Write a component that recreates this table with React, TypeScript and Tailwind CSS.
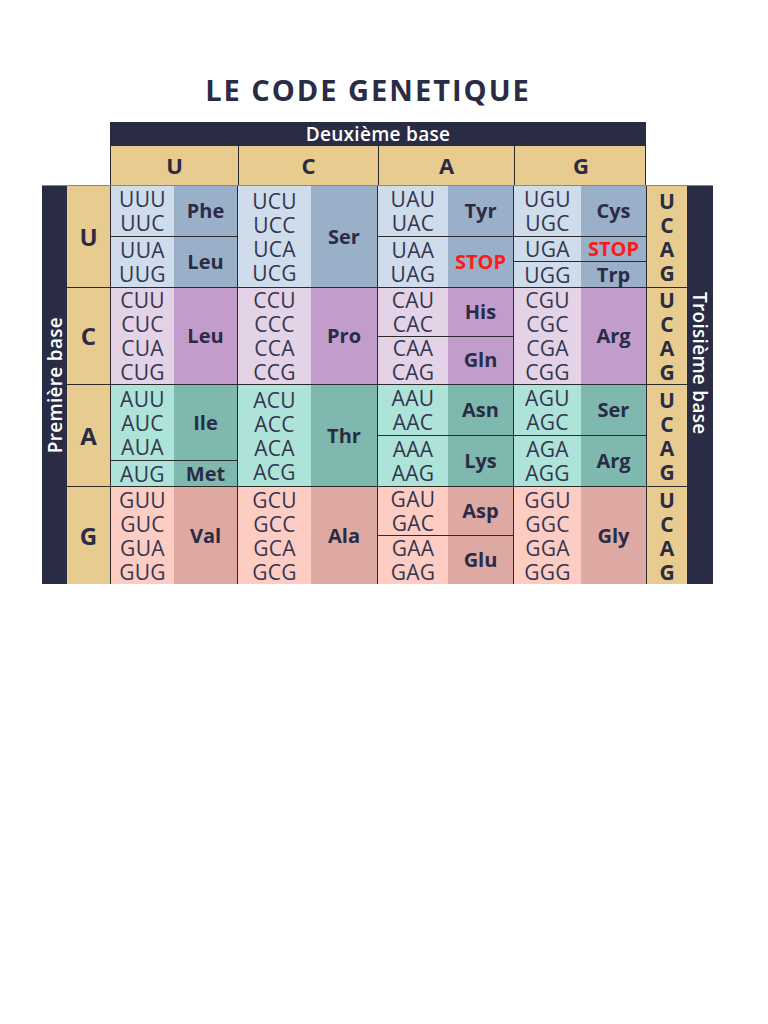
import React from "react"

type Group = { codons: string[]; aa: string; stop?: boolean }

const NAVY = "bg-[#2a2c46]"
const BEIGE = "bg-[#e8cb8e]"

const GROW: Record<number, string> = {
  1: "flex-[1]",
  2: "flex-[2]",
  3: "flex-[3]",
  4: "flex-[4]",
}

const ROWS = [
  {
    base: "U",
    codonBg: "bg-[#cedcec]",
    aaBg: "bg-[#9aafc8]",
    cells: [
      [
        { codons: ["UUU", "UUC"], aa: "Phe" },
        { codons: ["UUA", "UUG"], aa: "Leu" },
      ],
      [{ codons: ["UCU", "UCC", "UCA", "UCG"], aa: "Ser" }],
      [
        { codons: ["UAU", "UAC"], aa: "Tyr" },
        { codons: ["UAA", "UAG"], aa: "STOP", stop: true },
      ],
      [
        { codons: ["UGU", "UGC"], aa: "Cys" },
        { codons: ["UGA"], aa: "STOP", stop: true },
        { codons: ["UGG"], aa: "Trp" },
      ],
    ] as Group[][],
  },
  {
    base: "C",
    codonBg: "bg-[#e4d2e7]",
    aaBg: "bg-[#c29ccb]",
    cells: [
      [{ codons: ["CUU", "CUC", "CUA", "CUG"], aa: "Leu" }],
      [{ codons: ["CCU", "CCC", "CCA", "CCG"], aa: "Pro" }],
      [
        { codons: ["CAU", "CAC"], aa: "His" },
        { codons: ["CAA", "CAG"], aa: "Gln" },
      ],
      [{ codons: ["CGU", "CGC", "CGA", "CGG"], aa: "Arg" }],
    ] as Group[][],
  },
  {
    base: "A",
    codonBg: "bg-[#ade3d9]",
    aaBg: "bg-[#7fb8af]",
    cells: [
      [
        { codons: ["AUU", "AUC", "AUA"], aa: "Ile" },
        { codons: ["AUG"], aa: "Met" },
      ],
      [{ codons: ["ACU", "ACC", "ACA", "ACG"], aa: "Thr" }],
      [
        { codons: ["AAU", "AAC"], aa: "Asn" },
        { codons: ["AAA", "AAG"], aa: "Lys" },
      ],
      [
        { codons: ["AGU", "AGC"], aa: "Ser" },
        { codons: ["AGA", "AGG"], aa: "Arg" },
      ],
    ] as Group[][],
  },
  {
    base: "G",
    codonBg: "bg-[#fdcdc4]",
    aaBg: "bg-[#dea9a2]",
    cells: [
      [{ codons: ["GUU", "GUC", "GUA", "GUG"], aa: "Val" }],
      [{ codons: ["GCU", "GCC", "GCA", "GCG"], aa: "Ala" }],
      [
        { codons: ["GAU", "GAC"], aa: "Asp" },
        { codons: ["GAA", "GAG"], aa: "Glu" },
      ],
      [{ codons: ["GGU", "GGC", "GGA", "GGG"], aa: "Gly" }],
    ] as Group[][],
  },
]

// codon sub-column width per second base
const CODON_W = ["w-[63px]", "w-[73px]", "w-[70px]", "w-[67px]"]
const BASES = ["U", "C", "A", "G"]

function Cell({
  groups,
  codonW,
  codonBg,
  aaBg,
  top,
}: {
  groups: Group[]
  codonW: string
  codonBg: string
  aaBg: string
  top: boolean
}) {
  return (
    <div className={`flex flex-col border-l border-[#2b2b2b] ${top ? "" : "border-t"}`}>
      {groups.map((g, i) => (
        <div
          key={i}
          className={`flex min-h-0 ${GROW[g.codons.length]} ${i > 0 ? "border-t border-[#2b2b2b]" : ""}`}
        >
          <div className={`${codonW} ${codonBg} flex flex-col items-center justify-center`}>
            {g.codons.map((c) => (
              <div key={c} className="h-[24px] text-[21px] leading-[24px] tracking-[0.3px] text-[#34364f]">
                {c}
              </div>
            ))}
          </div>
          <div className={`flex-1 ${aaBg} flex items-center justify-center`}>
            <div
              className={`text-[20px] leading-[24px] font-bold ${g.stop ? "text-[#ff1a1a]" : "text-[#2a2c46]"}`}
            >
              {g.aa}
            </div>
          </div>
        </div>
      ))}
    </div>
  )
}

export default function App() {
  return (
    <div className="w-[768px] min-h-[1024px] bg-white pt-[72px] font-['Open_Sans',sans-serif]">
      <h1 className="pr-[32px] text-center text-[29px] leading-[36px] font-bold tracking-[2px] text-[#2a2c46]">
        LE CODE GENETIQUE
      </h1>

      {/* second base header */}
      <div className="ml-[110px] mt-[14px] w-[536px]">
        <div className={`${NAVY} flex h-[24px] items-center justify-center`}>
          <span className="text-[19px] leading-[24px] font-semibold tracking-[0.3px] text-white">
            Deuxième base
          </span>
        </div>
        <div className={`${BEIGE} grid h-[39px] grid-cols-[127px_140px_136px_133px] border-x border-[#2b2b2b]`}>
          {BASES.map((b, i) => (
            <div
              key={b}
              className={`flex items-center justify-center text-[22px] font-bold text-[#2a2c46] ${i > 0 ? "border-l border-[#2b2b2b]" : ""}`}
            >
              {b}
            </div>
          ))}
        </div>
      </div>

      {/* body */}
      <div className="ml-[42px] grid w-[671px] grid-cols-[25px_43px_127px_140px_136px_133px_41px_26px] grid-rows-[101px_97px_102px_98px] border-t border-[#8a8a8a]">
        <div className={`${NAVY} row-span-4 flex items-center justify-center`}>
          <span className="rotate-180 text-[19px] leading-[24px] font-semibold tracking-[0.3px] text-white [writing-mode:vertical-rl]">
            Première base
          </span>
        </div>
        {ROWS.map((row, r) => (
          <React.Fragment key={row.base}>
            <div
              className={`${BEIGE} col-start-2 flex items-center justify-center text-[24px] font-bold text-[#2a2c46] ${r > 0 ? "border-t border-[#2b2b2b]" : ""}`}
              style={{ gridRow: r + 1 }}
            >
              {row.base}
            </div>
            {row.cells.map((groups, c) => (
              <Cell
                key={c}
                groups={groups}
                codonW={CODON_W[c]}
                codonBg={row.codonBg}
                aaBg={row.aaBg}
                top={r === 0}
              />
            ))}
            <div
              className={`${BEIGE} flex flex-col items-center justify-center border-l border-[#2b2b2b] ${r > 0 ? "border-t" : ""}`}
            >
              {BASES.map((b) => (
                <div key={b} className="h-[24px] text-[21px] leading-[24px] font-bold text-[#2a2c46]">
                  {b}
                </div>
              ))}
            </div>
            {r === 0 && (
              <div className={`${NAVY} col-start-8 row-span-4 row-start-1 flex justify-center pt-[106px]`}>
                <span className="text-[19px] leading-[24px] font-semibold tracking-[0.3px] text-white [writing-mode:vertical-rl]">
                  Troisième base
                </span>
              </div>
            )}
          </React.Fragment>
        ))}
      </div>
    </div>
  )
}
